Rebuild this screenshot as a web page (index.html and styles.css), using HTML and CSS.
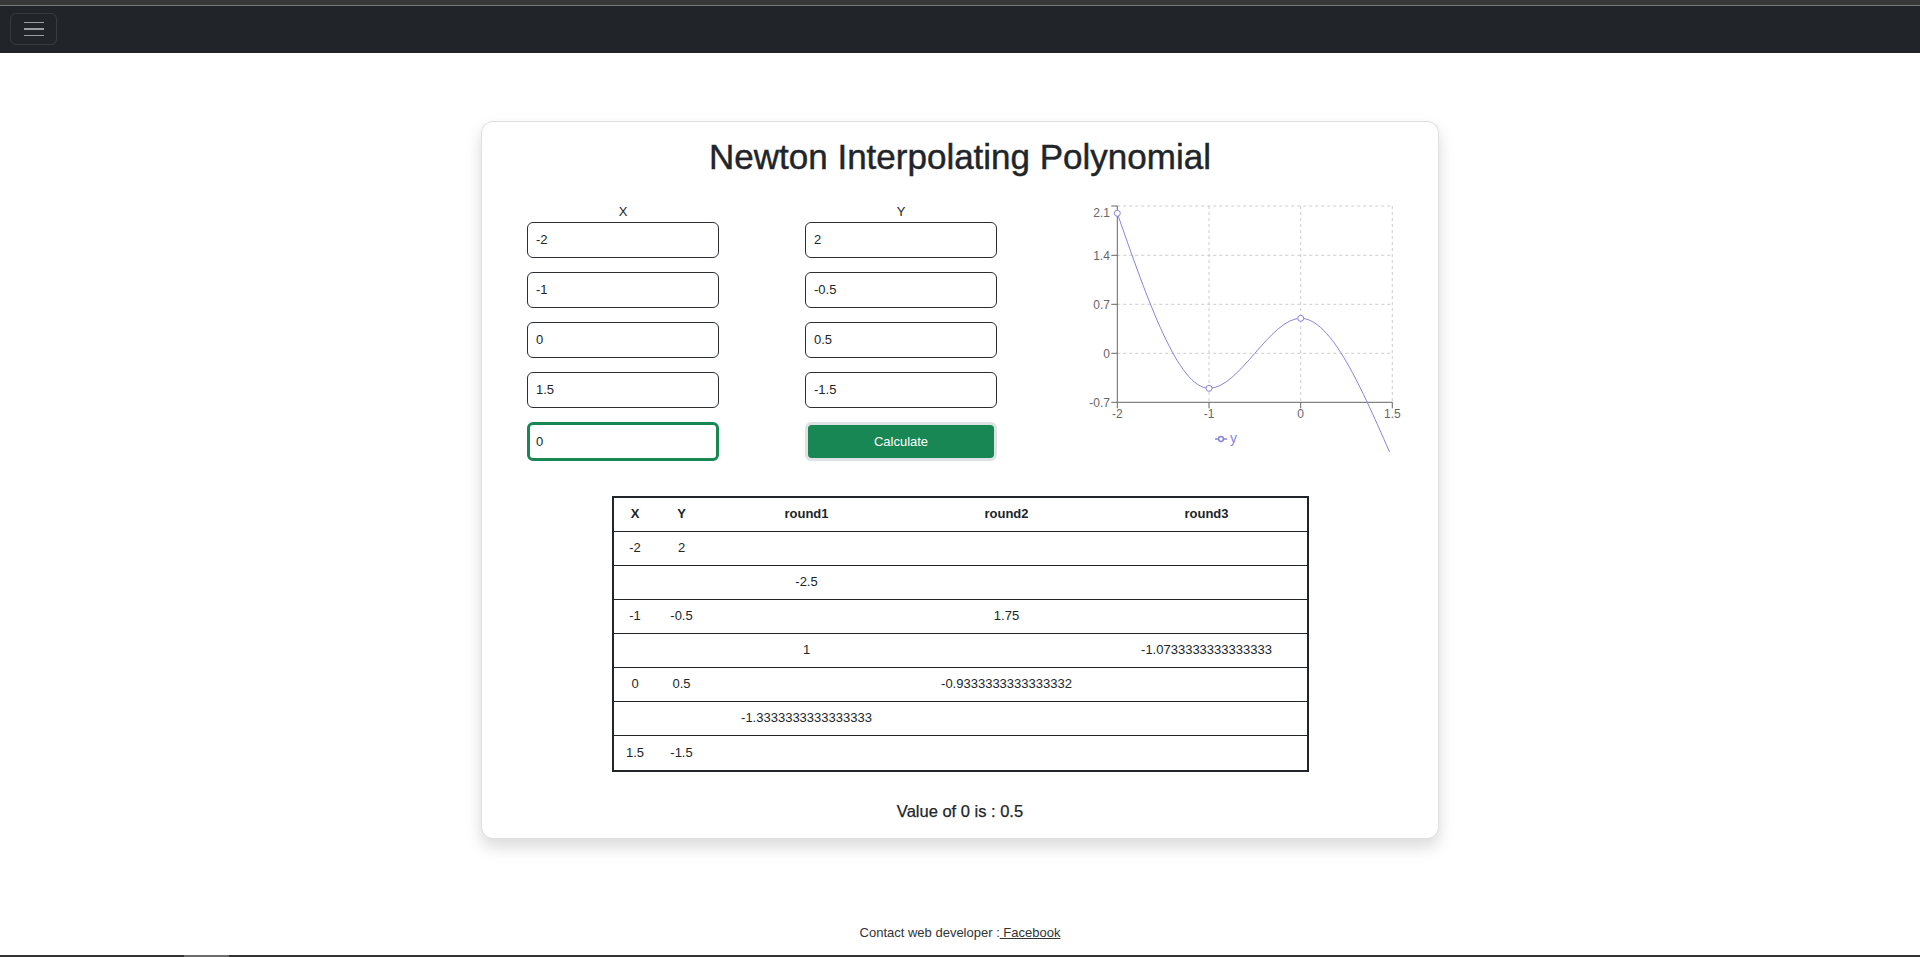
FILE: index.html
```html
<!DOCTYPE html>
<html lang="en">
<head>
<meta charset="utf-8">
<title>Newton Interpolating Polynomial</title>
<link rel="stylesheet" href="styles.css">
</head>
<body>
<div class="topbar"></div>
<nav class="navbar">
  <button class="toggler" type="button" aria-label="Toggle navigation">
    <span class="toggler-icon"><i></i><i></i><i></i></span>
  </button>
</nav>
<main class="main">
  <section class="card">
    <h1 class="title">Newton Interpolating Polynomial</h1>
    <div class="form-row">
      <div class="col col-x">
        <div class="col-label">X</div>
        <input class="field" type="text" value="-2">
        <input class="field" type="text" value="-1">
        <input class="field" type="text" value="0">
        <input class="field" type="text" value="1.5">
        <input class="field field-focus" type="text" value="0">
      </div>
      <div class="col col-y">
        <div class="col-label">Y</div>
        <input class="field" type="text" value="2">
        <input class="field" type="text" value="-0.5">
        <input class="field" type="text" value="0.5">
        <input class="field" type="text" value="-1.5">
        <button class="btn-calc" type="button">Calculate</button>
      </div>
      <div class="chart">
        <svg class="chart-svg" width="370" height="250" viewBox="0 0 370 250">
          <g class="grid" stroke="#cccccc" stroke-dasharray="3 3" fill="none">
            <line x1="77.3" y1="4" x2="352.3" y2="4"/>
            <line x1="77.3" y1="53.3" x2="352.3" y2="53.3"/>
            <line x1="77.3" y1="102.3" x2="352.3" y2="102.3"/>
            <line x1="77.3" y1="151.3" x2="352.3" y2="151.3"/>
            <line x1="169" y1="4" x2="169" y2="200.3"/>
            <line x1="260.7" y1="4" x2="260.7" y2="200.3"/>
            <line x1="352.3" y1="4" x2="352.3" y2="200.3"/>
          </g>
          <g class="axis" stroke="#666666" fill="none">
            <line x1="77.3" y1="4" x2="77.3" y2="200.3"/>
            <line x1="71.3" y1="4" x2="77.3" y2="4"/>
            <line x1="71.3" y1="53.3" x2="77.3" y2="53.3"/>
            <line x1="71.3" y1="102.3" x2="77.3" y2="102.3"/>
            <line x1="71.3" y1="151.3" x2="77.3" y2="151.3"/>
            <line x1="71.3" y1="200.3" x2="77.3" y2="200.3"/>
            <line x1="77.3" y1="200.3" x2="352.3" y2="200.3"/>
            <line x1="77.3" y1="200.3" x2="77.3" y2="206.3"/>
            <line x1="169" y1="200.3" x2="169" y2="206.3"/>
            <line x1="260.7" y1="200.3" x2="260.7" y2="206.3"/>
            <line x1="352.3" y1="200.3" x2="352.3" y2="206.3"/>
          </g>
          <g class="tick-text" fill="#666666" font-size="12" text-anchor="end">
            <text x="70" y="15.3">2.1</text>
            <text x="70" y="57.6">1.4</text>
            <text x="70" y="106.6">0.7</text>
            <text x="70" y="155.6">0</text>
            <text x="70" y="204.6">-0.7</text>
          </g>
          <g class="tick-text" fill="#666666" font-size="12" text-anchor="middle">
            <text x="77.3" y="216.3">-2</text>
            <text x="169" y="216.3">-1</text>
            <text x="260.7" y="216.3">0</text>
            <text x="352.3" y="216.3">1.5</text>
          </g>
          <path d="M77.3,11.3C107.9,99.1 138.4,186.3 169,186.3C199.6,186.3 230.1,116.3 260.7,116.3C291.3,116.3 321.7,186.3 352.3,256.3" fill="none" stroke="#8884d8" stroke-width="1"/>
          <g fill="#ffffff" stroke="#8884d8" stroke-width="1">
            <circle cx="77.3" cy="11.3" r="3"/>
            <circle cx="169" cy="186.3" r="3"/>
            <circle cx="260.7" cy="116.3" r="3"/>
          </g>
          <g class="legend">
            <line x1="175" y1="237" x2="187" y2="237" stroke="#8884d8" stroke-width="1.5"/>
            <circle cx="181" cy="237" r="2.4" fill="#ffffff" stroke="#8884d8" stroke-width="1.5"/>
            <text x="190" y="241" fill="#8884d8" font-size="14">y</text>
          </g>
        </svg>
      </div>
    </div>

    <table class="diff-table">
      <colgroup>
        <col class="c-x"><col class="c-y"><col class="c-r"><col class="c-r"><col class="c-r">
      </colgroup>
      <thead>
        <tr><th>X</th><th>Y</th><th>round1</th><th>round2</th><th>round3</th></tr>
      </thead>
      <tbody>
        <tr><td>-2</td><td>2</td><td></td><td></td><td></td></tr>
        <tr><td></td><td></td><td>-2.5</td><td></td><td></td></tr>
        <tr><td>-1</td><td>-0.5</td><td></td><td>1.75</td><td></td></tr>
        <tr><td></td><td></td><td>1</td><td></td><td>-1.0733333333333333</td></tr>
        <tr><td>0</td><td>0.5</td><td></td><td>-0.9333333333333332</td><td></td></tr>
        <tr><td></td><td></td><td>-1.3333333333333333</td><td></td><td></td></tr>
        <tr><td>1.5</td><td>-1.5</td><td></td><td></td><td></td></tr>
      </tbody>
    </table>

    <p class="result">Value of 0 is : 0.5</p>
  </section>
</main>
<footer class="footer">Contact web developer :<a class="footer-link" href="#"> Facebook</a></footer>
<div class="hscroll"><span class="hscroll-thumb"></span></div>
</body>
</html>
```
FILE: styles.css
```css
* { box-sizing: border-box; }

html, body {
  margin: 0;
  padding: 0;
  background: #ffffff;
}

body {
  font-family: "Liberation Sans", Arial, sans-serif;
  color: #212529;
  font-size: 13px;
  line-height: 1.5;
}

.topbar {
  height: 6px;
  background: #383838;
  border-bottom: 1px solid #7a7a7a;
}

.navbar {
  height: 47px;
  background: #212529;
  padding: 7px 10px;
  display: flex;
  align-items: flex-start;
}

.toggler {
  width: 47px;
  height: 32px;
  padding: 0;
  background: transparent;
  border: 1px solid rgba(255, 255, 255, 0.1);
  border-radius: 6px;
  display: flex;
  align-items: center;
  justify-content: center;
}

.toggler-icon {
  display: flex;
  flex-direction: column;
  gap: 4.8px;
  width: 20px;
}

.toggler-icon i {
  display: block;
  height: 1.7px;
  background: #9c9ea0;
}

.main {
  padding-top: 68px;
}

.card {
  width: 958px;
  margin: 0 auto;
  background: #ffffff;
  border: 1px solid rgba(0, 0, 0, 0.125);
  border-radius: 12px;
  box-shadow: 0 8px 16px rgba(0, 0, 0, 0.15);
  padding: 14px 0 15px;
}

.title {
  margin: 0 0 24px;
  text-align: center;
  font-size: 35px;
  line-height: 1.2;
  font-weight: 500;
  color: #212529;
  -webkit-text-stroke: 0.45px #212529;
}

.form-row {
  display: flex;
  align-items: flex-start;
  padding-left: 45px;
}

.col {
  width: 192px;
  display: flex;
  flex-direction: column;
}

.col-x { margin-right: 86px; }
.col-y { margin-right: 43px; }

.col-label {
  text-align: center;
  font-size: 13px;
  line-height: 19.5px;
  color: #212529;
}

.field {
  display: block;
  width: 192px;
  height: 36px;
  margin: 0 0 14px;
  padding: 0 8px;
  border: 1px solid #2b2f33;
  border-radius: 6px;
  background: #ffffff;
  font-family: "Liberation Sans", Arial, sans-serif;
  font-size: 13px;
  color: #212529;
  outline: none;
}

.field-focus {
  height: 39px;
  margin-bottom: 0;
  border: 3px solid #198754;
  padding-left: 6px;
}

.btn-calc {
  display: block;
  width: 192px;
  height: 39px;
  margin: 0;
  padding: 0;
  border: 3px solid #dfe2e5;
  border-radius: 6px;
  background: #198754;
  background-clip: padding-box;
  color: #ffffff;
  font-family: "Liberation Sans", Arial, sans-serif;
  font-size: 13px;
}

.chart {
  width: 370px;
  height: 250px;
}

.chart-svg {
  display: block;
  font-family: "Liberation Sans", Arial, sans-serif;
}

.diff-table {
  margin: 35px auto 0;
  width: 697px;
  table-layout: fixed;
  border-collapse: separate;
  border-spacing: 0;
  border: 2px solid #212529;
  font-size: 13px;
}

.c-x { width: 43px; }
.c-y { width: 50px; }
.c-r { width: 200px; }

.diff-table th,
.diff-table td {
  height: 34px;
  padding: 0;
  text-align: center;
  vertical-align: middle;
  border-bottom: 1px solid #212529;
  white-space: nowrap;
}

.diff-table th {
  height: 34px;
  font-weight: bold;
}

.diff-table tbody tr:last-child td {
  border-bottom: none;
  height: 34px;
}

.result {
  margin: 27px 0 0;
  text-align: center;
  font-size: 16.5px;
  line-height: 1.5;
  color: #212529;
  -webkit-text-stroke: 0.25px #212529;
}

.footer {
  margin-top: 84px;
  text-align: center;
  font-size: 13px;
  line-height: 19.5px;
  color: #333333;
}

.footer-link {
  color: #333333;
  text-decoration: underline;
}

.hscroll {
  position: fixed;
  left: 0;
  right: 0;
  bottom: 0;
  height: 2px;
  background: #333333;
}

.hscroll-thumb {
  position: absolute;
  left: 184px;
  width: 45px;
  top: 0;
  bottom: 0;
  background: #6b6b6b;
}
```
